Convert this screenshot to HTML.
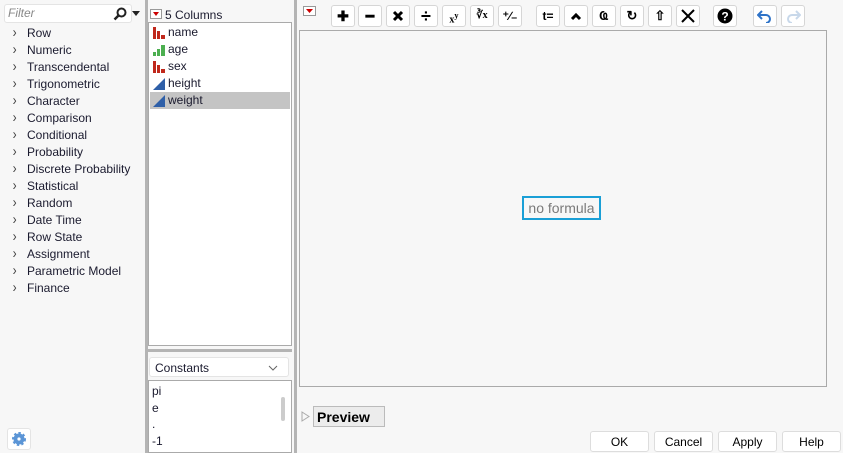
<!DOCTYPE html>
<html><head><style>
*{margin:0;padding:0;box-sizing:border-box}
body{width:843px;height:453px;background:#f7f7f7;font-family:"Segoe UI","Liberation Sans",sans-serif;font-size:12px;color:#1a1a2e;position:relative;overflow:hidden}
.a{position:absolute}
.cat{position:absolute;left:11px;height:17px;line-height:17px;white-space:nowrap}
.cat span{display:inline-block;width:16px;color:#444;font-size:15px;transform:scaleX(0.8)}
.tb{position:absolute;top:5px;width:24px;height:22px;background:#fff;border:1px solid #d6d6d6;border-radius:3px;font-weight:bold;font-size:14px;text-align:center;line-height:20px;color:#000}
.btn{position:absolute;top:431px;height:21px;background:#fff;border:1px solid #ddd;border-radius:3px;text-align:center;line-height:19px;font-size:12px;color:#000}
</style></head><body>
<div class="a" style="left:4px;top:4px;width:128px;height:19px;background:#fff;border:1px solid #e4e4e4;border-radius:3px"></div>
<div class="a" style="left:8px;top:6px;font-style:italic;color:#888;font-size:12px">Filter</div>
<svg class="a" style="left:113px;top:7px" width="14" height="14"><circle cx="8.5" cy="5.5" r="4" fill="none" stroke="#222" stroke-width="2"/><line x1="5.5" y1="8.5" x2="1.5" y2="12.5" stroke="#222" stroke-width="2.5"/></svg>
<svg class="a" style="left:132px;top:11px" width="9" height="6"><path d="M0 0h8l-4 5z" fill="#222"/></svg>
<div class="cat" style="top:24px"><span>›</span>Row</div>
<div class="cat" style="top:41px"><span>›</span>Numeric</div>
<div class="cat" style="top:58px"><span>›</span>Transcendental</div>
<div class="cat" style="top:75px"><span>›</span>Trigonometric</div>
<div class="cat" style="top:92px"><span>›</span>Character</div>
<div class="cat" style="top:109px"><span>›</span>Comparison</div>
<div class="cat" style="top:126px"><span>›</span>Conditional</div>
<div class="cat" style="top:143px"><span>›</span>Probability</div>
<div class="cat" style="top:160px"><span>›</span>Discrete Probability</div>
<div class="cat" style="top:177px"><span>›</span>Statistical</div>
<div class="cat" style="top:194px"><span>›</span>Random</div>
<div class="cat" style="top:211px"><span>›</span>Date Time</div>
<div class="cat" style="top:228px"><span>›</span>Row State</div>
<div class="cat" style="top:245px"><span>›</span>Assignment</div>
<div class="cat" style="top:262px"><span>›</span>Parametric Model</div>
<div class="cat" style="top:279px"><span>›</span>Finance</div>
<div class="a" style="left:7px;top:428px;width:24px;height:22px;background:#fff;border:1px solid #e4e4e4;border-radius:3px"></div>
<svg class="a" style="left:11px;top:431px" width="16" height="16"><circle cx="8" cy="8" r="5.5" fill="#5b95d6" stroke="#5b95d6" stroke-width="3" stroke-dasharray="2.2 2"/><circle cx="8" cy="8" r="1.6" fill="#fff"/></svg>
<div class="a" style="left:145px;top:0;width:3px;height:453px;background:#b4b4b4"></div>
<div class="a" style="left:294px;top:0;width:3px;height:453px;background:#b4b4b4"></div>
<div class="a" style="left:148px;top:349px;width:144px;height:3px;background:#b4b4b4"></div>
<svg class="a" style="left:150px;top:9px" width="12" height="10"><rect x="0.5" y="0.5" width="11" height="9" fill="#fff" stroke="#999"/><path d="M3 3h6l-3 4z" fill="#c00"/></svg>
<div class="a" style="left:165px;top:8px;font-size:12px">5 Columns</div>
<div class="a" style="left:148px;top:22px;width:144px;height:324px;background:#fff;border:1px solid #aaa"></div>
<div class="a" style="left:150px;top:92px;width:140px;height:17px;background:#c4c4c4"></div>
<svg class="a" style="left:153px;top:27px" width="13" height="12"><path d="M0 0h3v12H0zM4 4h3v8H4zM8 8h4v4H8z" fill="#c0281c"/></svg>
<div class="a" style="left:168px;top:25px">name</div>
<svg class="a" style="left:153px;top:44px" width="13" height="12"><path d="M0 8h3v4H0zM4 5h3v7H4zM8 1h4v11H8z" fill="#4caf50"/></svg>
<div class="a" style="left:168px;top:42px">age</div>
<svg class="a" style="left:153px;top:61px" width="13" height="12"><path d="M0 0h3v12H0zM4 4h3v8H4zM8 8h4v4H8z" fill="#c0281c"/></svg>
<div class="a" style="left:168px;top:59px">sex</div>
<svg class="a" style="left:153px;top:78px" width="13" height="12"><path d="M0 12L12 0v12z" fill="#2e5fa8"/></svg>
<div class="a" style="left:168px;top:76px">height</div>
<svg class="a" style="left:153px;top:95px" width="13" height="12"><path d="M0 12L12 0v12z" fill="#2e5fa8"/></svg>
<div class="a" style="left:168px;top:93px">weight</div>
<div class="a" style="left:149px;top:357px;width:140px;height:20px;background:#fff;border:1px solid #e4e4e4;border-radius:3px"></div>
<div class="a" style="left:155px;top:361px">Constants</div>
<svg class="a" style="left:268px;top:365px" width="10" height="6"><path d="M1 1l4 4 4-4" fill="none" stroke="#666"/></svg>
<div class="a" style="left:148px;top:380px;width:144px;height:73px;background:#fff;border:1px solid #aaa"></div>
<div class="a" style="left:281px;top:397px;width:4px;height:24px;background:#ccc;border-radius:2px"></div>
<div class="a" style="left:152px;top:384px">pi</div>
<div class="a" style="left:152px;top:401px">e</div>
<div class="a" style="left:152px;top:417px">.</div>
<div class="a" style="left:152px;top:434px">-1</div>
<svg class="a" style="left:303px;top:6px" width="13" height="10"><rect x="0.5" y="0.5" width="12" height="9" fill="#fff" stroke="#999"/><path d="M3 3h7l-3.5 4z" fill="#c00"/></svg>
<div class="tb" style="left:331px">✚</div>
<div class="tb" style="left:358px">━</div>
<div class="tb" style="left:386px"><svg width="12" height="12" style="margin-top:4px"><path d="M2 2l8 8M10 2l-8 8" stroke="#000" stroke-width="3"/></svg></div>
<div class="tb" style="left:414px;font-size:18px">÷</div>
<div class="tb" style="left:442px;font-size:10px;font-family:'Liberation Serif',serif">x<sup>y</sup></div>
<div class="tb" style="left:470px;font-size:10px;font-family:'Liberation Serif',serif">∛x</div>
<div class="tb" style="left:498px;font-size:12px">⁺∕₋</div>
<div class="tb" style="left:536px;font-size:12px">t=</div>
<div class="tb" style="left:564px"><svg width="12" height="10" style="margin-top:5px"><path d="M2 8l4-4 4 4" fill="none" stroke="#000" stroke-width="3"/></svg></div>
<div class="tb" style="left:592px;font-size:13px">Ҩ</div>
<div class="tb" style="left:620px;font-size:13px">↻</div>
<div class="tb" style="left:648px;font-size:13px">⇧</div>
<div class="tb" style="left:676px"><svg width="14" height="14" style="margin-top:3px"><path d="M1 1l12 12M13 1L1 13" stroke="#000" stroke-width="2"/></svg></div>
<div class="tb" style="left:713px"><svg width="16" height="16" style="margin-top:2px"><circle cx="8" cy="8" r="7.5" fill="#000"/><text x="8" y="12.5" font-size="12" font-weight="bold" text-anchor="middle" fill="#fff" font-family="Liberation Sans">?</text></svg></div>
<div class="tb" style="left:753px"><svg width="16" height="14" style="margin-top:3px"><path d="M5 2L1 6l4 4M1 6h8a4 4 0 0 1 0 8" fill="none" stroke="#2e73c8" stroke-width="2"/></svg></div>
<div class="tb" style="left:781px"><svg width="16" height="14" style="margin-top:3px"><path d="M11 2l4 4-4 4M15 6H7a4 4 0 0 0 0 8" fill="none" stroke="#c8d8ea" stroke-width="2"/></svg></div>
<div class="a" style="left:299px;top:30px;width:528px;height:357px;background:#f7f7f7;border:1px solid #aaa"></div>
<div class="a" style="left:522px;top:196px;width:79px;height:24px;border:2px solid #1a9fd6;color:#7a7a7a;font-size:14px;line-height:20px;text-align:center">no formula</div>
<svg class="a" style="left:301px;top:411px" width="9" height="11"><path d="M1 1l7 4.5L1 10z" fill="none" stroke="#aaa"/></svg>
<div class="a" style="left:313px;top:406px;width:72px;height:21px;background:#ececec;border:1px solid #bbb;font-weight:bold;font-size:14px;line-height:20px;padding-left:3px;color:#000">Preview</div>
<div class="btn" style="left:590px;width:59px;line-height:20px">OK</div>
<div class="btn" style="left:654px;width:59px;line-height:20px">Cancel</div>
<div class="btn" style="left:718px;width:59px;line-height:20px">Apply</div>
<div class="btn" style="left:782px;width:59px;line-height:20px">Help</div>
</body></html>
